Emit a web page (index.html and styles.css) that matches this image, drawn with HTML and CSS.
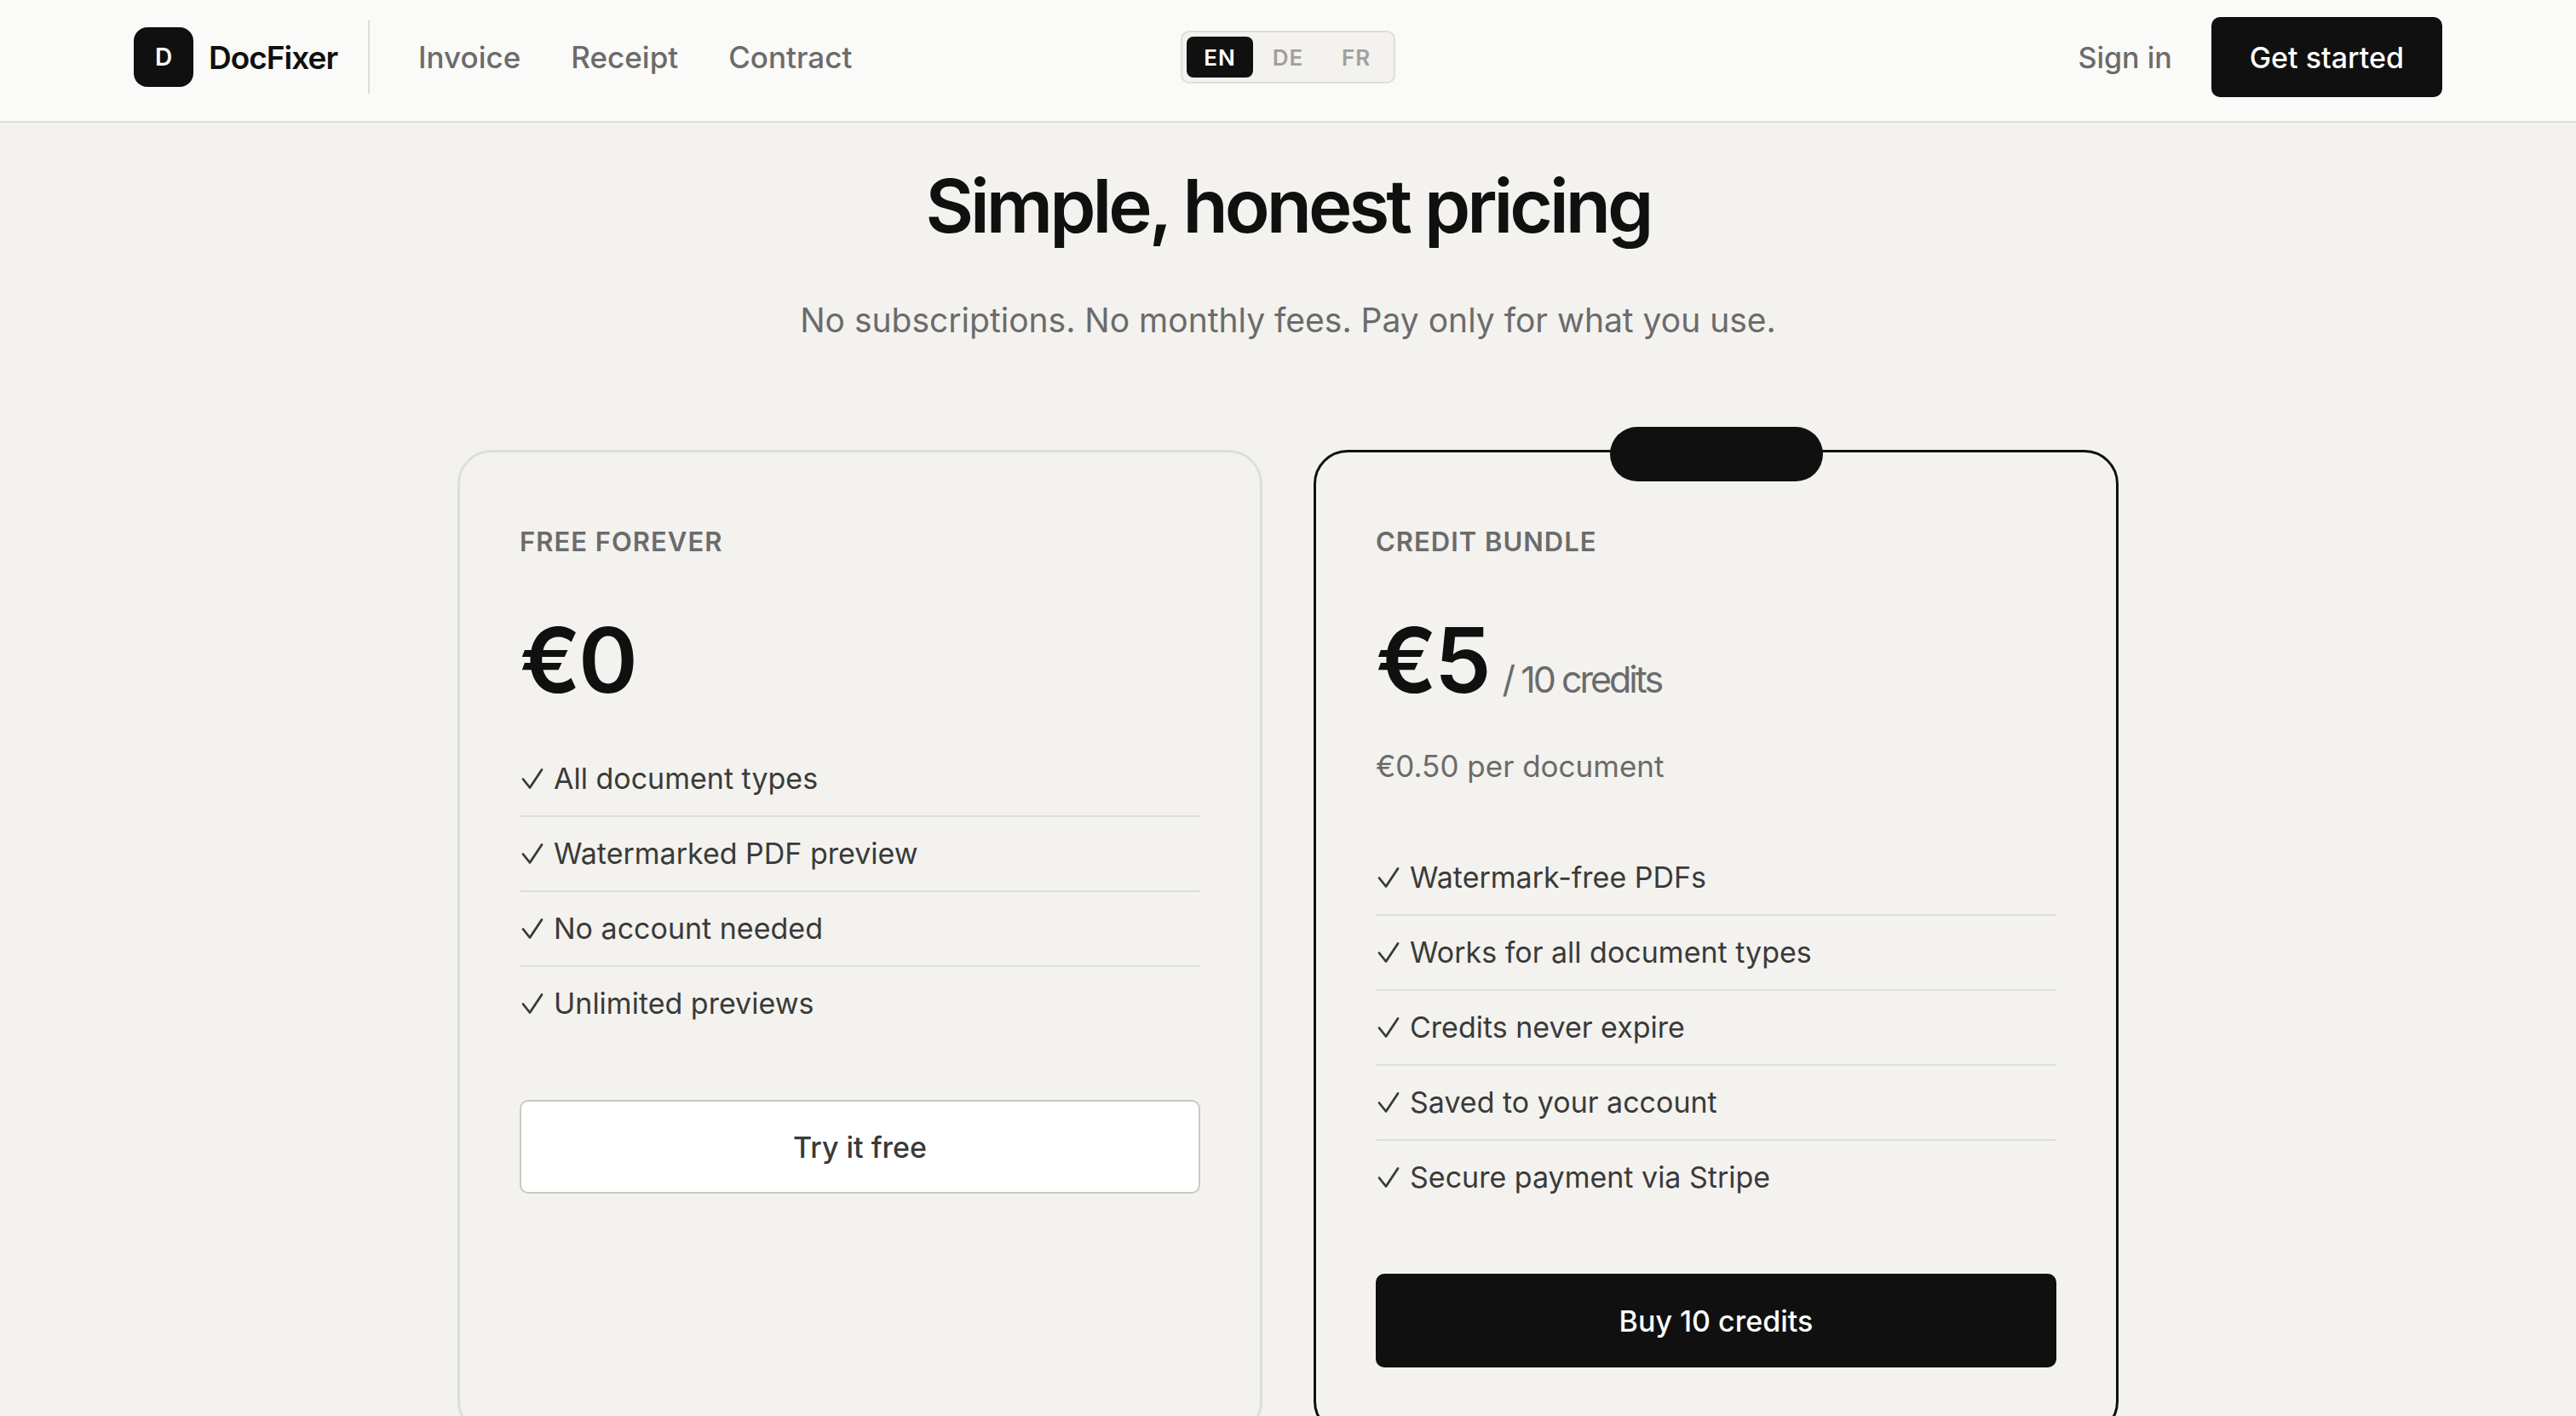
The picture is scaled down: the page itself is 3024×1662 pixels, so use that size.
FILE: index.html
```html
<!DOCTYPE html>
<html lang="en">
<head>
    <meta charset="UTF-8">
    <meta name="viewport" content="width=device-width, initial-scale=1.0">
    <title>DocFixer - Pricing</title>
    <link rel="stylesheet" href="styles.css">
</head>
<body>
    <!-- Check icon shared by the feature lists -->
    <svg class="sprite" aria-hidden="true">
        <symbol id="check" viewBox="0 0 28 28">
            <path d="M4 14.5 L12 24.5 L26 3.5" fill="none" stroke="currentColor" stroke-width="2.8" stroke-linecap="round" stroke-linejoin="round"/>
        </symbol>
    </svg>

    <header class="header">
        <div class="header-left">
            <a href="#" class="logo">
                <span class="logo-mark">D</span>
                <span class="logo-name">DocFixer</span>
            </a>
            <nav class="nav">
                <a href="#">Invoice</a>
                <a href="#">Receipt</a>
                <a href="#">Contract</a>
            </nav>
        </div>
        <div class="lang">
            <button type="button" class="active">EN</button>
            <button type="button">DE</button>
            <button type="button">FR</button>
        </div>
        <div class="header-right">
            <a href="#" class="sign-in">Sign in</a>
            <button type="button" class="get-started">Get started</button>
        </div>
    </header>

    <main class="pricing">
        <h1>Simple, honest pricing</h1>
        <p class="subtitle">No subscriptions. No monthly fees. Pay only for what you use.</p>

        <div class="cards">
            <section class="card">
                <h2>Free forever</h2>
                <div class="price">€0</div>
                <ul class="features">
                    <li><svg><use href="#check"/></svg>All document types</li>
                    <li><svg><use href="#check"/></svg>Watermarked PDF preview</li>
                    <li><svg><use href="#check"/></svg>No account needed</li>
                    <li><svg><use href="#check"/></svg>Unlimited previews</li>
                </ul>
                <button type="button" class="btn">Try it free</button>
            </section>

            <section class="card featured">
                <div class="badge"></div>
                <h2>Credit bundle</h2>
                <div class="price">€5 <span>/ 10 credits</span></div>
                <p class="per-doc">€0.50 per document</p>
                <ul class="features">
                    <li><svg><use href="#check"/></svg>Watermark-free PDFs</li>
                    <li><svg><use href="#check"/></svg>Works for all document types</li>
                    <li><svg><use href="#check"/></svg>Credits never expire</li>
                    <li><svg><use href="#check"/></svg>Saved to your account</li>
                    <li><svg><use href="#check"/></svg>Secure payment via Stripe</li>
                </ul>
                <button type="button" class="btn btn-dark">Buy 10 credits</button>
            </section>
        </div>
    </main>
</body>
</html>
```

FILE: styles.css
```css
* {
    box-sizing: border-box;
    margin: 0;
    padding: 0;
}
body {
    font-family: Inter, "Liberation Sans", sans-serif;
    font-size: 34px;
    background: #f3f2ee;
    color: #101010;
}
a {
    color: inherit;
    text-decoration: none;
}
button {
    font-family: inherit;
    cursor: pointer;
}
.sprite {
    display: none;
}

/* Header */
.header {
    display: grid;
    grid-template-columns: 1fr auto 1fr;
    align-items: center;
    padding: 20px 157px 28px;
    background: #fafaf8;
    border-bottom: 2px solid #deded8;
}
.header-left,
.header-right,
.logo,
.nav {
    display: flex;
    align-items: center;
}
.logo {
    gap: 18px;
    height: 86px;
    padding-right: 36px;
    border-right: 2px solid #deded8;
}
.logo-mark {
    display: flex;
    align-items: center;
    justify-content: center;
    width: 70px;
    height: 70px;
    border-radius: 16px;
    background: #101010;
    color: #fff;
    font-size: 28px;
    font-weight: 600;
}
.logo-name {
    font-size: 37px;
    font-weight: 600;
    letter-spacing: -1px;
}
.nav {
    gap: 59px;
    margin-left: 57px;
    color: #6b6b6b;
    font-size: 35px;
    font-weight: 500;
}
.lang {
    display: flex;
    gap: 2px;
    padding: 5px;
    background: #f3f2ee;
    border: 2px solid #deded8;
    border-radius: 10px;
}
.lang button {
    width: 78px;
    height: 48px;
    border: none;
    border-radius: 8px;
    background: none;
    color: #a0a0a0;
    font-size: 26px;
    font-weight: 600;
    letter-spacing: 1px;
}
.lang .active {
    background: #101010;
    color: #fff;
}
.header-right {
    justify-content: flex-end;
    gap: 46px;
}
.sign-in {
    color: #6b6b6b;
    font-weight: 500;
}
.get-started {
    height: 94px;
    padding: 0 45px;
    border: none;
    border-radius: 10px;
    background: #101010;
    color: #fff;
    font-size: 34px;
    font-weight: 500;
}

/* Pricing */
.pricing {
    padding: 50px 40px 140px;
    text-align: center;
}
h1 {
    font-size: 87px;
    line-height: 96px;
    font-weight: 600;
    letter-spacing: -4px;
}
.subtitle {
    margin-top: 56px;
    font-size: 39px;
    line-height: 60px;
    color: #6b6b6b;
}
.cards {
    display: grid;
    grid-template-columns: 1fr 1fr;
    gap: 60px;
    max-width: 1950px;
    margin: 122px auto 0;
    text-align: left;
}
.card {
    position: relative;
    padding: 77px 70px;
    border: 3px solid #deded8;
    border-radius: 40px;
}
.featured {
    border-color: #101010;
}
.badge {
    position: absolute;
    top: -30px;
    left: 50%;
    width: 250px;
    height: 64px;
    transform: translateX(-50%);
    border-radius: 32px;
    background: #101010;
}
h2 {
    font-size: 31px;
    line-height: 56px;
    font-weight: 600;
    color: #6b6b6b;
    letter-spacing: 1px;
    text-transform: uppercase;
}
.price {
    display: flex;
    align-items: baseline;
    gap: 16px;
    height: 100px;
    margin: 61px 0 46px;
    font-size: 106px;
    line-height: 100px;
    font-weight: 600;
    letter-spacing: -3px;
}
.price span {
    font-size: 43px;
    font-weight: 400;
    color: #6b6b6b;
}
.per-doc {
    margin-bottom: 60px;
    font-size: 35px;
    line-height: 56px;
    color: #6b6b6b;
}
.features {
    list-style: none;
    margin-bottom: 70px;
    color: #3a3a3a;
}
.features li {
    display: flex;
    align-items: center;
    gap: 12px;
    padding: 15px 0;
    line-height: 56px;
    border-bottom: 2px solid #deded8;
}
.features li:last-child {
    border-bottom: none;
}
.features svg {
    width: 28px;
    height: 28px;
}
.btn {
    width: 100%;
    height: 110px;
    border: 2px solid #c9c9c3;
    border-radius: 10px;
    background: #fff;
    color: #3a3a3a;
    font-size: 34px;
    font-weight: 500;
}
.btn-dark {
    border-color: #101010;
    background: #101010;
    color: #fff;
}
```
